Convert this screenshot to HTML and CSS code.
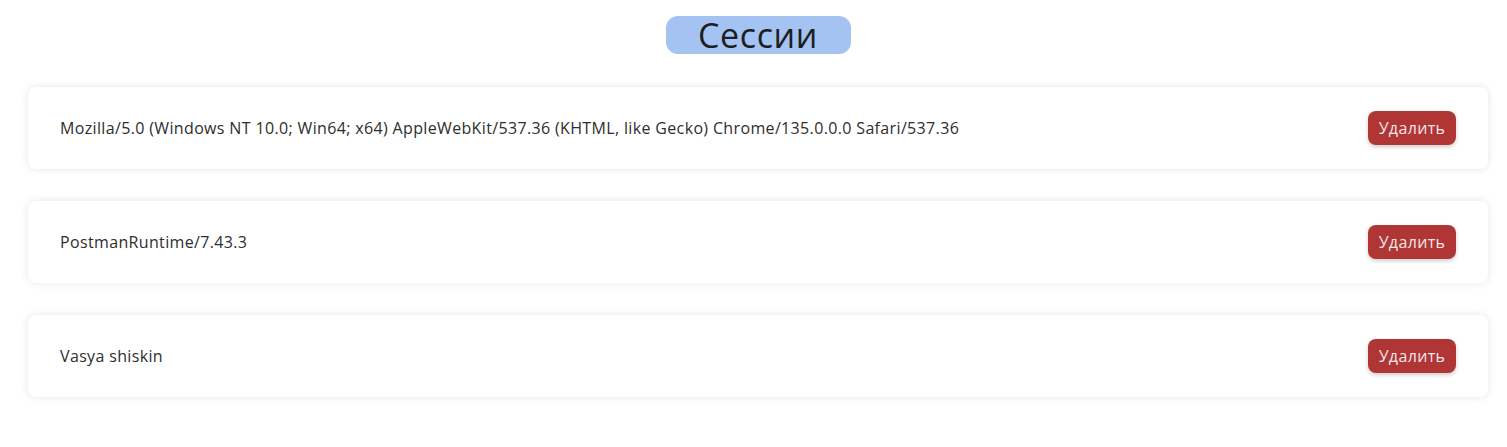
FILE: index.html
```html
<!DOCTYPE html>
<html lang="ru">
<head>
<meta charset="utf-8">
<title>Сессии</title>
<link rel="stylesheet" href="styles.css">
</head>
<body>
<main class="page">
  <div class="title-wrap"><h1 class="title">Сессии</h1></div>
  <section class="sessions">
    <div class="card">
      <span class="agent">Mozilla/5.0 (Windows NT 10.0; Win64; x64) AppleWebKit/537.36 (KHTML, like Gecko) Chrome/135.0.0.0 Safari/537.36</span>
      <button class="delete">Удалить</button>
    </div>
    <div class="card">
      <span class="agent">PostmanRuntime/7.43.3</span>
      <button class="delete">Удалить</button>
    </div>
    <div class="card">
      <span class="agent">Vasya shiskin</span>
      <button class="delete">Удалить</button>
    </div>
  </section>
</main>
</body>
</html>
```
FILE: styles.css
```css
* { box-sizing: border-box; }
html, body { margin: 0; background: #fff; }
body {
  font-family: "Open Sans", "Liberation Sans", sans-serif;
  color: #333;
}
.page {
  padding: 16px 19px 16px 28px;
}
.title-wrap {
  display: flex;
  justify-content: center;
}
.title {
  margin: 0;
  height: 38px;
  width: 185px;
  display: flex;
  align-items: center;
  justify-content: center;
  background: #a4c3f3;
  border-radius: 12px;
  font-size: 34px;
  line-height: 38px;
  font-weight: 400;
  letter-spacing: 0.6px;
  color: #1e1e1e;
}
.sessions {
  margin-top: 33px;
  display: flex;
  flex-direction: column;
  gap: 32px;
}
.card {
  height: 82px;
  display: flex;
  align-items: center;
  justify-content: space-between;
  padding: 0 32px;
  background: #fff;
  border-radius: 8px;
  box-shadow: 0 0 8px rgba(0, 0, 0, 0.1);
}
.agent {
  font-size: 16px;
  letter-spacing: 0.35px;
  color: #2e2e2e;
}
.delete {
  height: 34px;
  width: 88px;
  padding: 0;
  border: none;
  border-radius: 8px;
  background: #b03535;
  color: #f3e6e6;
  font-family: inherit;
  font-size: 16px;
  letter-spacing: 0.35px;
  box-shadow: 0 2px 4px rgba(0, 0, 0, 0.2);
  cursor: pointer;
}
```
